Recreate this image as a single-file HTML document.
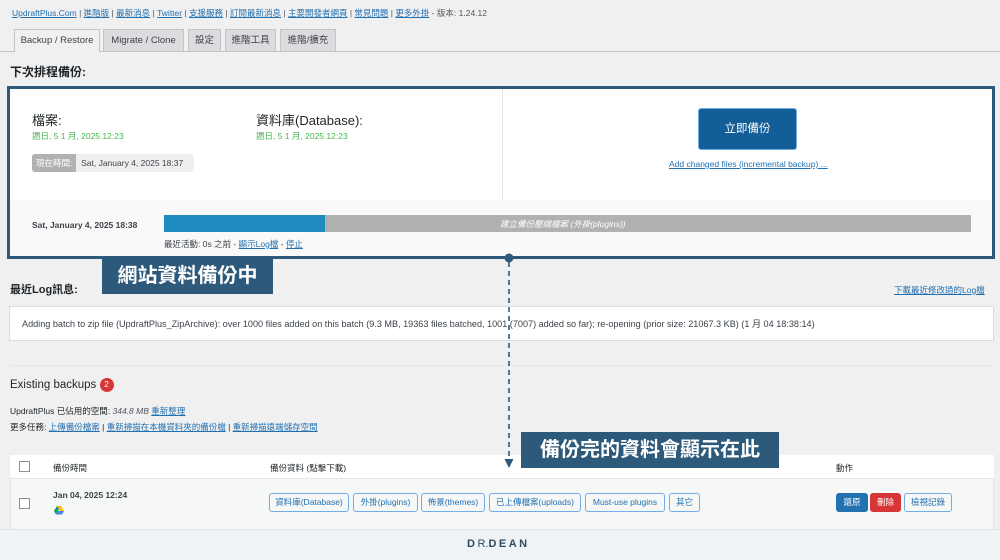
<!DOCTYPE html>
<html><head><meta charset="utf-8"><style>
*{box-sizing:border-box;margin:0;padding:0}
body{width:1000px;height:560px;overflow:hidden;background:#f0f0f1;font-family:"Liberation Sans","Noto Sans CJK TC",sans-serif;color:#3c434a;position:relative;font-size:9px}
.a{position:absolute;white-space:nowrap}
a{color:#2271b1;text-decoration:underline}
.tab{position:absolute;top:29px;height:22px;background:#dcdcde;border:1px solid #c3c4c7;border-bottom:none;font-size:9.5px;line-height:21px;text-align:center;color:#3c434a}
.btn{position:absolute;top:493px;height:19px;border:1px solid #72aee6;border-radius:3px;background:#f6f7f7;color:#2271b1;font-size:8.5px;line-height:17px;text-align:center}
.lbl{position:absolute;background:#2d5a7b;color:#fff;font-weight:bold;text-align:center}
</style></head><body>
<div class="a" style="left:12px;top:7px;font-size:8.5px;color:#50575e"><a>UpdraftPlus.Com</a> | <a>進階版</a> | <a>最新消息</a> | <a>Twitter</a> | <a>支援服務</a> | <a>訂閱最新消息</a> | <a>主要開發者網頁</a> | <a>常見問題</a> | <a>更多外掛</a> - 版本: 1.24.12</div>
<div class="a" style="left:0;top:51px;width:1000px;height:1px;background:#c3c4c7"></div>
<div class="tab" style="left:14px;width:86px;background:#f0f0f1;height:23px">Backup / Restore</div>
<div class="tab" style="left:103px;width:81px">Migrate / Clone</div>
<div class="tab" style="left:188px;width:33px">設定</div>
<div class="tab" style="left:225px;width:51px">進階工具</div>
<div class="tab" style="left:280px;width:56px">進階/擴充</div>
<div class="a" style="left:10px;top:63px;font-size:12px;font-weight:bold;color:#1d2327">下次排程備份:</div>

<div class="a" style="left:7px;top:86px;width:988px;height:173px;border:3px solid #2d5a7b;background:#f9f9f9">
 <div class="a" style="left:0;top:0;width:982px;height:111px;background:#fff"></div>
 <div class="a" style="left:492px;top:0;width:1px;height:111px;background:#e5e5e5"></div>
 <div class="a" style="left:22px;top:21px;font-size:13px;color:#1d2327">檔案:</div>
 <div class="a" style="left:246px;top:21px;font-size:13px;color:#1d2327">資料庫(Database):</div>
 <div class="a" style="left:22px;top:41px;font-size:8.5px;color:#46b450">週日, 5 1 月, 2025 12:23</div>
 <div class="a" style="left:246px;top:41px;font-size:8.5px;color:#46b450">週日, 5 1 月, 2025 12:23</div>
 <div class="a" style="left:22px;top:65px;width:162px;height:18px;background:#efefef;border-radius:3px;font-size:8.5px;line-height:18px"><span style="display:inline-block;background:#b1b1b1;color:#fff;padding:0 4px;border-radius:3px 0 0 3px">現在時間:</span> &nbsp;Sat, January 4, 2025 18:37</div>
 <div class="a" style="left:688px;top:19px;width:99px;height:42px;background:#135e96;border:1px solid #72aee6;border-radius:3px;color:#fff;font-size:11.5px;line-height:40px;text-align:center">立即備份</div>
 <div class="a" style="left:659px;top:70px;font-size:8.5px"><a>Add changed files (incremental backup) ...</a></div>
 <div class="a" style="left:22px;top:131px;font-size:8.5px;font-weight:bold;color:#3c434a">Sat, January 4, 2025 18:38</div>
 <div class="a" style="left:154px;top:126px;width:807px;height:17px;background:#b1b1b1"></div>
 <div class="a" style="left:154px;top:126px;width:161px;height:17px;background:#1e8cbe"></div>
 <div class="a" style="left:490px;top:129px;font-size:8.5px;color:#fff;font-style:italic">建立備份壓縮檔案 (外掛(plugins))</div>
 <div class="a" style="left:154px;top:149px;font-size:8.5px">最近活動: 0s 之前 - <a>顯示Log檔</a> - <a>停止</a></div>
</div>
<div class="lbl" style="left:102px;top:259px;width:171px;height:35px;font-size:20px;line-height:34px">網站資料備份中</div>
<div class="a" style="left:10px;top:281px;font-size:11px;font-weight:bold;color:#1d2327">最近Log訊息:</div>
<div class="a" style="left:894px;top:284px;font-size:8.5px"><a>下載最近修改過的Log檔</a></div>
<div class="a" style="left:9px;top:306px;width:985px;height:35px;background:#fff;border:1px solid #dcdcde;font-size:9.1px;line-height:34px;padding-left:12px">Adding batch to zip file (UpdraftPlus_ZipArchive): over 1000 files added on this batch (9.3 MB, 19363 files batched, 1001 (7007) added so far); re-opening (prior size: 21067.3 KB) (1 月 04 18:38:14)</div>
<div class="a" style="left:10px;top:365px;width:984px;height:1px;background:#e5e5e5"></div>

<div class="a" style="left:10px;top:378px;font-size:11.5px;color:#1d2327">Existing backups <span style="display:inline-block;width:14px;height:14px;border-radius:7px;background:#d63638;color:#fff;font-size:8px;line-height:14px;text-align:center;vertical-align:1px">2</span></div>
<div class="a" style="left:10px;top:405px;font-size:8.5px;color:#1d2327">UpdraftPlus 已佔用的空間: <i style="color:#50575e">344.8 MB</i> <a>重新整理</a></div>
<div class="a" style="left:10px;top:421px;font-size:8.5px;color:#1d2327">更多任務: <a>上傳備份檔案</a> | <a>重新掃描在本機資料夾的備份檔</a> | <a>重新掃描遠端儲存空間</a></div>

<div class="a" style="left:10px;top:455px;width:984px;height:75px;background:#f6f7f7;border:1px solid #e5e5e5"></div>
<div class="a" style="left:10px;top:455px;width:984px;height:24px;background:#fff;border-bottom:1px solid #e5e5e5"></div>
<div class="a" style="left:19px;top:461px;width:11px;height:11px;border:1px solid #8c8f94;background:#fff"></div>
<div class="a" style="left:19px;top:498px;width:11px;height:11px;border:1px solid #8c8f94;background:#fff"></div>
<div class="a" style="left:53px;top:462px;font-size:8.5px;color:#1d2327">備份時間</div>
<div class="a" style="left:270px;top:462px;font-size:8.5px;color:#1d2327">備份資料 (點擊下載)</div>
<div class="a" style="left:836px;top:462px;font-size:8.5px;color:#1d2327">動作</div>
<div class="a" style="left:53px;top:490px;font-size:8.5px;font-weight:bold;color:#3c434a">Jan 04, 2025 12:24</div>
<svg class="a" style="left:54px;top:506px" width="10" height="9"><path d="M3 0h4l3 5H6z" fill="#fbbc04"/><path d="M3 0L0 5l2 3.5L5 3z" fill="#0f9d58"/><path d="M2 8.5h6L10 5H4z" fill="#4285f4"/></svg>
<div class="btn" style="left:269px;width:80px">資料庫(Database)</div>
<div class="btn" style="left:353px;width:65px">外掛(plugins)</div>
<div class="btn" style="left:421px;width:64px">佈景(themes)</div>
<div class="btn" style="left:489px;width:92px">已上傳檔案(uploads)</div>
<div class="btn" style="left:585px;width:80px">Must-use plugins</div>
<div class="btn" style="left:669px;width:31px">其它</div>
<div class="btn" style="left:836px;width:32px;background:#2271b1;border-color:#2271b1;color:#fff">還原</div>
<div class="btn" style="left:870px;width:31px;background:#d63638;border-color:#d63638;color:#fff">刪除</div>
<div class="btn" style="left:904px;width:48px">檢視記錄</div>

<svg class="a" style="left:500px;top:252px" width="20" height="225"><circle cx="9" cy="6" r="4.5" fill="#2d5a7b"/><line x1="9" y1="10" x2="9" y2="208" stroke="#2d5a7b" stroke-width="1.6" stroke-dasharray="5,4"/><path d="M4.5 207 L13.5 207 L9 216 Z" fill="#2d5a7b"/></svg>
<div class="lbl" style="left:521px;top:432px;width:258px;height:36px;font-size:20px;line-height:36px">備份完的資料會顯示在此</div>

<div class="a" style="left:0;top:529px;width:1000px;height:31px;background:#f0f3f6;border-top:1px solid #dde2e8"></div>
<div class="a" style="left:467px;top:538px;font-size:11px;font-weight:bold;color:#2d4a63;letter-spacing:2.5px">D<span style="font-weight:normal;letter-spacing:0">R.</span>DEAN</div>
</body></html>
